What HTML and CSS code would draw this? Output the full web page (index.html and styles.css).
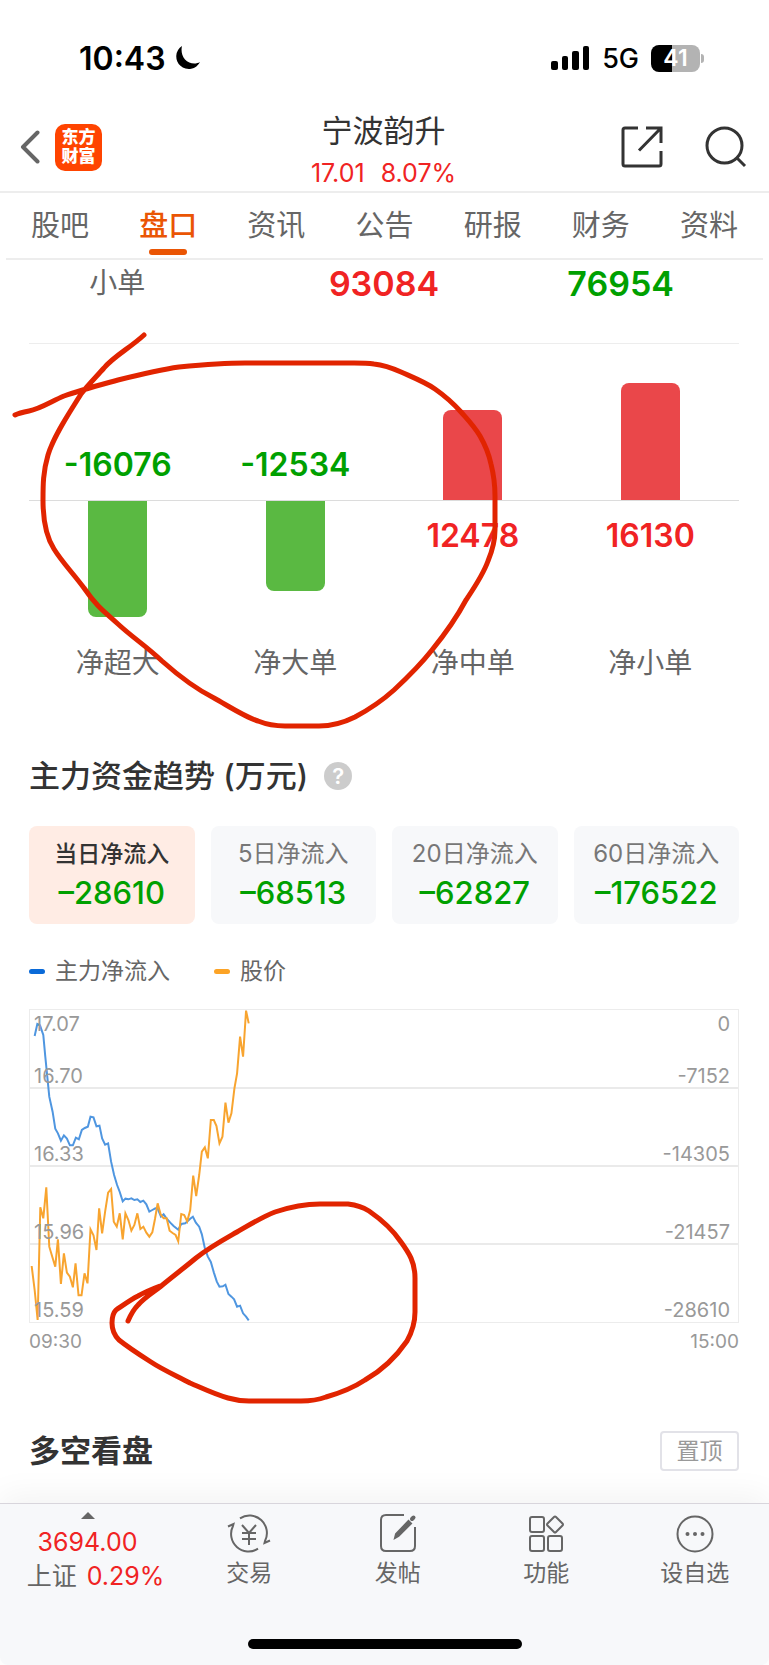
FILE: index.html
```html
<!DOCTYPE html>
<html lang="zh-CN">
<head>
    <meta charset="UTF-8">
    <meta name="viewport" content="width=device-width, initial-scale=1.0">
    <title>宁波韵升 - 盘口</title>
    <link rel="stylesheet" href="styles.css">
</head>
<body>
    <div class="status-bar">
        <div class="status-left">
            <span class="clock">10:43</span>
            <svg width="26" height="26" viewBox="0 0 26 26"><path d="M8 1A12.500 12.500 0 1 0 26 17C22 19.500 15 19 11 14.500C7.500 10.500 7 5 8 1Z" fill="#000"/></svg>
        </div>
        <div class="status-right">
            <svg width="39" height="24" viewBox="0 0 39 24">
                <rect x="0" y="15" width="7" height="9" rx="2"/>
                <rect x="11" y="10" width="6" height="14" rx="2"/>
                <rect x="21" y="5" width="7" height="19" rx="2"/>
                <rect x="32" y="0" width="6" height="24" rx="2"/>
            </svg>
            <span class="network">5G</span>
            <span class="battery">41</span>
        </div>
    </div>

    <header class="header">
        <div class="header-side">
            <button class="icon-button" aria-label="返回">
                <svg width="20" height="34" viewBox="0 0 20 34" fill="none" stroke="#666" stroke-width="4" stroke-linecap="round" stroke-linejoin="round"><path d="M17.500 2.500L3 17L17.500 31.500"/></svg>
            </button>
            <a class="logo" href="#">东方<br>财富</a>
        </div>
        <div class="stock">
            <h1 class="stock-name">宁波韵升</h1>
            <p class="stock-price"><span>17.01</span><span>8.07%</span></p>
        </div>
        <div class="header-side header-right">
            <button class="icon-button" aria-label="分享">
                <svg width="42" height="42" viewBox="0 0 42 42" fill="none" stroke="#333" stroke-width="3"><path d="M17 2H4Q2 2 2 4V38Q2 40 4 40H38Q40 40 40 38V25"/><path d="M25 2H40V17M40 2L18 24.500"/></svg>
            </button>
            <button class="icon-button" aria-label="搜索">
                <svg width="42" height="42" viewBox="0 0 42 42" fill="none" stroke="#333" stroke-width="3"><circle cx="19.500" cy="19.500" r="17.500"/><path d="M32 32L40 40"/></svg>
            </button>
        </div>
    </header>

    <nav class="tabs">
        <a href="#">股吧</a>
        <a href="#" class="active">盘口</a>
        <a href="#">资讯</a>
        <a href="#">公告</a>
        <a href="#">研报</a>
        <a href="#">财务</a>
        <a href="#">资料</a>
    </nav>

    <main class="content">
        <table class="orders">
            <tr>
                <th scope="row">小单</th>
                <td class="up">93084</td>
                <td class="down">76954</td>
            </tr>
        </table>

        <!-- net flow bars -->
        <section class="bars">
            <div class="bar-col">
                <div class="bar-top"><span class="bar-value down">-16076</span></div>
                <div class="bar-bottom"><div class="bar bar-down" style="height: 116px"></div></div>
                <span class="bar-label">净超大</span>
            </div>
            <div class="bar-col">
                <div class="bar-top"><span class="bar-value down">-12534</span></div>
                <div class="bar-bottom"><div class="bar bar-down" style="height: 90px"></div></div>
                <span class="bar-label">净大单</span>
            </div>
            <div class="bar-col">
                <div class="bar-top"><div class="bar bar-up" style="height: 90px"></div></div>
                <div class="bar-bottom"><span class="bar-value up">12478</span></div>
                <span class="bar-label">净中单</span>
            </div>
            <div class="bar-col">
                <div class="bar-top"><div class="bar bar-up" style="height: 117px"></div></div>
                <div class="bar-bottom"><span class="bar-value up">16130</span></div>
                <span class="bar-label">净小单</span>
            </div>
        </section>

        <section>
            <h2 class="trend-title">主力资金趋势 (万元) <button class="help" aria-label="说明">?</button></h2>

            <div class="cards">
                <button class="card active"><span class="card-label">当日净流入</span><span class="card-value">–28610</span></button>
                <button class="card"><span class="card-label">5日净流入</span><span class="card-value">–68513</span></button>
                <button class="card"><span class="card-label">20日净流入</span><span class="card-value">–62827</span></button>
                <button class="card"><span class="card-label">60日净流入</span><span class="card-value">–176522</span></button>
            </div>

            <div class="legend">
                <span class="legend-item legend-flow">主力净流入</span>
                <span class="legend-item legend-price">股价</span>
            </div>

            <div class="chart">
                <svg class="plot" viewBox="88 30 2130 936" preserveAspectRatio="none" fill="none">
                    <path d="M88 264H2218M88 498H2218M88 732H2218" stroke="#e4e4e4" stroke-width="5"/>
                    <polyline stroke="#4f96e0" stroke-width="6" points="102,108 110,72 118,76 128,105 134,170 146,290 156,335 164,386 172,400 181,422 190,406 199,416 208,436 217,436 226,413 235,418 244,390 253,384 262,380 270,350 279,352 288,379 297,377 305,415 314,434 323,430 332,485 341,525 350,555 358,576 367,604 375,596 384,598 393,595 402,600 411,598 420,606 429,602 438,613 447,635 456,630 465,625 472,626 482,650 490,643 500,657 510,668 520,678 534,689 543,672 555,670 570,656 578,650 587,668 597,680 605,703 614,745 623,770 632,786 641,817 650,845 658,860 668,859 676,854 685,882 694,890 702,898 711,920 720,917 729,940 738,950 746,961"/>
                    <polyline stroke="#f8a42f" stroke-width="6" points="93,798 102,870 111,960 119,622 128,655 137,562 146,740 155,770 164,800 172,718 181,852 190,760 199,818 208,830 217,862 225,790 234,886 243,886 252,820 261,850 270,688 279,706 288,750 296,625 305,700 314,635 323,578 332,567 340,665 349,680 358,640 367,718 375,640 384,660 393,692 402,675 411,640 420,687 429,680 438,698 447,710 456,697 464,657 472,610 481,643 490,655 499,655 508,692 517,699 526,705 534,724 543,642 552,645 561,664 570,630 579,527 588,588 597,525 605,455 614,442 623,475 632,360 641,360 649,378 658,430 667,410 676,308 685,368 694,340 703,265 711,220 720,110 729,170 738,32 746,70"/>
                </svg>
                <div class="axis">
                    <span>17.07</span><span>16.70</span><span>16.33</span><span>15.96</span><span>15.59</span>
                </div>
                <div class="axis axis-right">
                    <span>0</span><span>-7152</span><span>-14305</span><span>-21457</span><span>-28610</span>
                </div>
            </div>
            <div class="times"><span>09:30</span><span>15:00</span></div>
        </section>

        <section class="watch">
            <h2 class="watch-title">多空看盘</h2>
            <button class="pin">置顶</button>
        </section>
    </main>

    <footer class="footer">
        <div class="toolbar">
            <a class="index" href="#">
                <svg width="14" height="7" viewBox="0 0 14 7"><path d="M7 0L14 7H0Z" fill="#666"/></svg>
                <span class="up">3694.00</span>
                <span class="index-change"><span>上证</span><span class="up">0.29%</span></span>
            </a>
            <a class="tool" href="#">
                <svg width="44" height="40" viewBox="0 0 44 40" fill="none" stroke="#666" stroke-width="2"><path d="M13 5.300A17.500 17.500 0 0 1 38 28L37.500 30L43 27.500M31 35.700A17.500 17.500 0 0 1 6 13L6.500 11L1 13.500"/><path d="M15 12L22 20L29 12M15 20H29M15 26H29M22 20V32"/></svg>
                <span>交易</span>
            </a>
            <a class="tool" href="#">
                <svg width="44" height="40" viewBox="0 0 44 40" fill="none" stroke="#666" stroke-width="2"><path d="M28 2H10Q5 2 5 7V33Q5 38 10 38H34Q39 38 39 33V14"/><path d="M19 25L20 21L32.500 8L35 10.500L22.500 23Z" fill="#666"/><path d="M36 6L37.500 4.500" stroke-width="4" stroke-linecap="round"/></svg>
                <span>发帖</span>
            </a>
            <a class="tool" href="#">
                <svg width="44" height="40" viewBox="0 0 44 40" fill="none" stroke="#666" stroke-width="2"><rect x="6" y="4" width="14" height="15" rx="2"/><rect x="6" y="23" width="14" height="15" rx="2"/><rect x="24" y="23" width="14" height="15" rx="2"/><path d="M30 4Q31 3 32 4L38.500 10.500Q39.500 11.500 38.500 12.500L32 19Q31 20 30 19L23.500 12.500Q22.500 11.500 23.500 10.500Z"/></svg>
                <span>功能</span>
            </a>
            <a class="tool" href="#">
                <svg width="44" height="40" viewBox="0 0 44 40" fill="none" stroke="#666" stroke-width="2"><circle cx="22" cy="21" r="17.500"/><g fill="#666" stroke="none"><circle cx="14.500" cy="21" r="2"/><circle cx="22" cy="21" r="2"/><circle cx="29.500" cy="21" r="2"/></g></svg>
                <span>设自选</span>
            </a>
        </div>
        <div class="home-bar"></div>
    </footer>

    <!-- red pen marks over the page -->
    <svg class="marks" viewBox="0 0 769 1665" fill="none" stroke="#e12400" stroke-width="5" stroke-linecap="round" stroke-linejoin="round">
        <path d="M144 335C130 348 114 356 104 368C96 377 88 385 81 394C70 412 54 435 48 455C43 472 43 485 43 500C43 516 45 535 54 549C62 562 72 572 84 588C97 607 105 612 118 624C132 637 146 646 162 661C180 677 198 690 214 698C230 707 245 717 258 721C268 725 276 726 285 726L319 726C332 726 345 722 355 717C370 709 384 699 394 690C408 677 421 664 432 650C445 634 458 615 466 600C474 588 483 575 488 561C493 549 495 541 495 530L495 496C495 483 493 472 491 464C488 450 484 443 480 436C474 426 468 420 461 412C453 403 445 396 435 389C425 382 412 377 401 372C392 368 383 365 374 364C367 363 360 363 354 363L245 363C222 363 200 365 179 367C158 370 138 375 118 380C100 385 81 390 64 396C52 401 40 409 29 411C24 412 19 413 15 415"/>
        <path d="M128 1321C131 1314 133 1310 138 1305C144 1298 152 1293 160 1287C172 1277 184 1268 196 1258C210 1247 223 1240 237 1232C249 1225 262 1217 275 1212C290 1207 305 1204 320 1204H348C356 1205 363 1207 369 1211C382 1220 393 1230 401 1242C409 1253 415 1262 415 1278V1312C415 1322 412 1332 407 1341C396 1357 381 1371 365 1380C353 1388 340 1393 326 1397C318 1400 310 1401 301 1401H249C242 1401 235 1400 228 1398C214 1394 202 1388 190 1383C177 1376 163 1370 151 1362C140 1355 129 1348 119 1340C114 1335 112 1329 112 1323C112 1318 113 1313 116 1310C122 1306 130 1300 138 1296C145 1292 152 1289 160 1286"/>
    </svg>
</body>
</html>
```
FILE: styles.css
```css
* {
    box-sizing: border-box;
}
body {
    position: relative;
    margin: 0;
    background: #fff;
    color: #333;
    font-family: Inter, "Noto Sans CJK SC", sans-serif;
}
h1, h2, p {
    margin: 0;
}
a {
    color: inherit;
    text-decoration: none;
}
button {
    margin: 0;
    padding: 0;
    border: none;
    background: none;
    font-family: inherit;
    cursor: pointer;
}
svg {
    display: block;
}
.up {
    color: #f02323;
}
.down {
    color: #00a000;
}

/* status bar */
.status-bar {
    display: flex;
    justify-content: space-between;
    height: 100px;
    padding: 39px 69px 23px 79px;
    color: #000;
}
.status-left, .status-right {
    display: flex;
    align-items: center;
}
.status-left {
    gap: 8px;
}
.status-right {
    gap: 12px;
}
.clock {
    font-size: 32px;
    font-weight: 600;
}
.network {
    font-size: 27px;
    font-weight: 500;
}
.battery {
    position: relative;
    width: 49px;
    height: 27px;
    border-radius: 8px;
    background: linear-gradient(to right, #000 42%, #b3b3b3 42%);
    color: #fff;
    font-size: 23px;
    font-weight: 600;
    line-height: 27px;
    text-align: center;
}
.battery::after {
    content: "";
    position: absolute;
    top: 9px;
    right: -4px;
    width: 3px;
    height: 9px;
    border-radius: 0 4px 4px 0;
    background: #b3b3b3;
}

/* header */
.header {
    display: flex;
    justify-content: space-between;
    height: 93px;
    padding: 8px 22px 0 20px;
    border-bottom: 2px solid #ededed;
}
.header-side {
    display: flex;
    align-items: center;
    gap: 15px;
    width: 126px;
    height: 78px;
}
.header-right {
    justify-content: space-between;
}
.logo {
    width: 47px;
    height: 47px;
    padding-top: 4px;
    border-radius: 10px;
    background: #ff4400;
    color: #fff;
    font-size: 17px;
    font-weight: 900;
    line-height: 19px;
    text-align: center;
}
.stock {
    text-align: center;
}
.stock-name {
    font-size: 31px;
    font-weight: 400;
    line-height: 46px;
}
.stock-price {
    display: flex;
    justify-content: center;
    gap: 16px;
    color: #f02323;
    font-size: 25px;
    line-height: 38px;
}

/* tabs */
.tabs {
    display: flex;
    height: 67px;
    margin: 0 6px;
    border-bottom: 2px solid #ededed;
}
.tabs a {
    position: relative;
    flex: 1;
    color: #666;
    font-size: 29px;
    line-height: 66px;
    text-align: center;
}
.tabs .active {
    color: #ea5504;
    font-weight: 500;
}
.tabs .active::after {
    content: "";
    position: absolute;
    bottom: 3px;
    left: 50%;
    width: 38px;
    height: 6px;
    margin-left: -19px;
    border-radius: 3px;
    background: #ea5504;
}

.content {
    padding: 0 30px 0 29px;
}
.orders {
    width: 100%;
    height: 84px;
    border-collapse: collapse;
    border-bottom: 1px solid #ededed;
    table-layout: fixed;
    text-align: center;
}
.orders th, .orders td {
    padding: 0;
    line-height: 47px;
    vertical-align: top;
}
.orders th {
    padding-right: 60px;
    color: #666;
    font-size: 28px;
    font-weight: 400;
}
.orders td {
    font-size: 34px;
    font-weight: 600;
}

/* net flow bars */
.bars {
    display: grid;
    grid-template-columns: repeat(4, 1fr);
}
.bar-col, .bar-top, .bar-bottom {
    display: flex;
    flex-direction: column;
    align-items: center;
}
.bar-top {
    justify-content: flex-end;
    width: 100%;
    height: 157px;
    border-bottom: 1px solid #dcdcdc;
}
.bar-bottom {
    height: 142px;
}
.bar {
    width: 59px;
}
.bar-up {
    border-radius: 8px 8px 0 0;
    background: #ea474a;
}
.bar-down {
    border-radius: 0 0 8px 8px;
    background: #5ab942;
}
.bar-value {
    margin: 15px 0;
    font-size: 32px;
    font-weight: 600;
    line-height: 40px;
}
.bar-label {
    color: #666;
    font-size: 28px;
    line-height: 40px;
}

/* fund trend */
.trend-title {
    display: flex;
    align-items: center;
    gap: 16px;
    margin-top: 71px;
    font-size: 31px;
    font-weight: 500;
    line-height: 44px;
}
.help {
    width: 28px;
    height: 28px;
    border-radius: 50%;
    background: #ccc;
    color: #fff;
    font-size: 22px;
    font-weight: 600;
    line-height: 28px;
}
.cards {
    display: grid;
    grid-template-columns: repeat(4, 1fr);
    gap: 16px;
    margin-top: 28px;
}
.card {
    padding: 10px 0 11px;
    border-radius: 8px;
    background: #f7f8fa;
}
.card.active {
    background: #ffece4;
}
.card-label, .card-value {
    display: block;
}
.card-label {
    color: #777;
    font-size: 24px;
    line-height: 36px;
}
.active .card-label {
    color: #333;
    font-size: 23px;
    font-weight: 500;
}
.card-value {
    color: #00a000;
    font-size: 31px;
    font-weight: 500;
    line-height: 41px;
}
.legend {
    display: flex;
    gap: 44px;
    margin-top: 29px;
    color: #666;
    font-size: 23px;
    line-height: 36px;
}
.legend-item {
    display: flex;
    align-items: center;
    gap: 10px;
}
.legend-item::before {
    content: "";
    width: 16px;
    height: 5px;
    border-radius: 3px;
}
.legend-flow::before {
    background: #0a6ad8;
}
.legend-price::before {
    background: #fca326;
}
.chart {
    position: relative;
    display: flex;
    justify-content: space-between;
    height: 314px;
    margin-top: 20px;
    padding: 1px 8px 0 4px;
    border: 1px solid #ececec;
}
.plot {
    position: absolute;
    top: 0;
    left: 0;
    width: 100%;
    height: 100%;
}
.axis {
    position: relative;
    display: grid;
    grid-template-rows: 26px 52px repeat(3, 78px);
    align-items: end;
    color: #999;
    font-size: 20px;
    line-height: 26px;
}
.axis-right {
    text-align: right;
}
.times {
    display: flex;
    justify-content: space-between;
    padding-top: 4px;
    color: #999;
    font-size: 19px;
    line-height: 30px;
}
.watch {
    display: flex;
    justify-content: space-between;
    align-items: center;
    height: 40px;
    margin: 74px 0 32px;
}
.watch-title {
    font-size: 31px;
    font-weight: 700;
    line-height: 36px;
}
.pin {
    width: 79px;
    height: 40px;
    border: 2px solid #e2e2e8;
    border-radius: 4px;
    color: #999;
    font-size: 23px;
    line-height: 36px;
}

/* bottom bar */
.footer {
    height: 162px;
    border-top: 1px solid #d8d5dc;
    border-radius: 0 0 8px 8px;
    background: #f7f8fa;
    box-shadow: 0 -8px 32px rgba(0, 0, 0, 0.05);
}
.toolbar {
    display: flex;
    height: 135px;
    color: #666;
}
.index {
    display: flex;
    flex-direction: column;
    align-items: center;
    width: 175px;
    padding-top: 8px;
    font-size: 25px;
    line-height: 34px;
}
.index svg {
    margin-bottom: 6px;
}
.index-change {
    display: flex;
    gap: 10px;
    padding-left: 16px;
}
.tool {
    display: flex;
    flex: 1;
    flex-direction: column;
    align-items: center;
    padding-top: 9px;
    font-size: 23px;
    line-height: 40px;
}
.home-bar {
    width: 274px;
    height: 10px;
    margin: 0 auto;
    border-radius: 5px;
    background: #000;
}

.marks {
    position: absolute;
    top: 0;
    left: 0;
    width: 100%;
    pointer-events: none;
}
```
